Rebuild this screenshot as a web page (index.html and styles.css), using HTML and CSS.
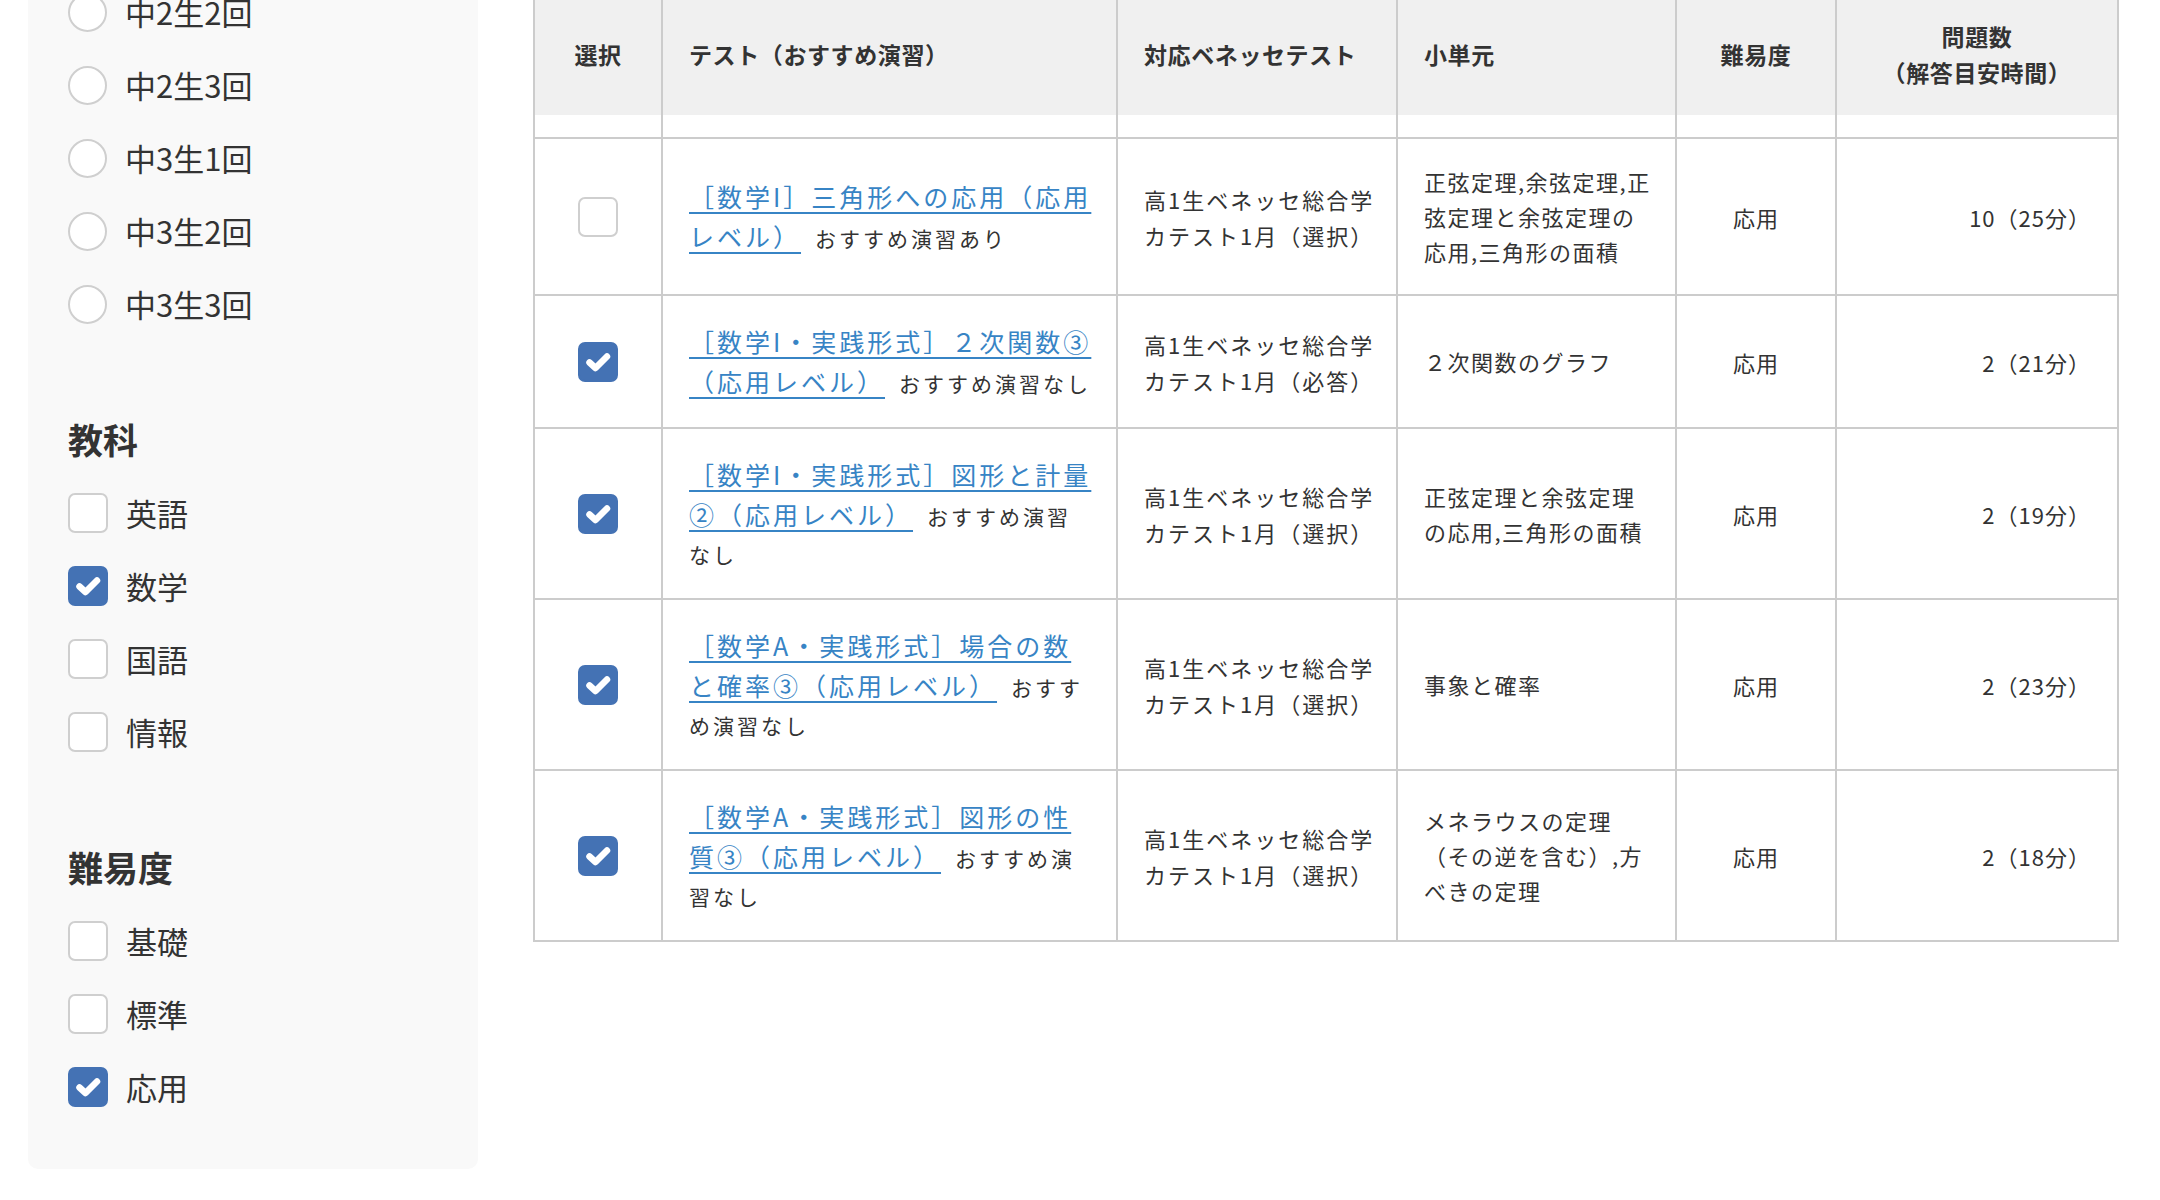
FILE: index.html
```html
<!DOCTYPE html>
<html lang="ja">
<head>
<meta charset="utf-8">
<title>テスト選択</title>
<link rel="stylesheet" href="styles.css">
</head>
<body>
<div class="page">
  <aside class="sidebar">
    <ul class="opts">
      <li class="opt"><span class="radio"></span><span class="lbl">中2生2回</span></li>
      <li class="opt"><span class="radio"></span><span class="lbl">中2生3回</span></li>
      <li class="opt"><span class="radio"></span><span class="lbl">中3生1回</span></li>
      <li class="opt"><span class="radio"></span><span class="lbl">中3生2回</span></li>
      <li class="opt"><span class="radio"></span><span class="lbl">中3生3回</span></li>
    </ul>
    <section class="group">
      <h3 class="group-title">教科</h3>
      <ul class="opts">
        <li class="opt"><span class="box"></span><span class="lbl">英語</span></li>
        <li class="opt"><span class="box checked"><svg viewBox="0 0 40 40"><path d="M11.5 20.5 L17.5 26 L29 14.5"/></svg></span><span class="lbl">数学</span></li>
        <li class="opt"><span class="box"></span><span class="lbl">国語</span></li>
        <li class="opt"><span class="box"></span><span class="lbl">情報</span></li>
      </ul>
    </section>
    <section class="group">
      <h3 class="group-title">難易度</h3>
      <ul class="opts">
        <li class="opt"><span class="box"></span><span class="lbl">基礎</span></li>
        <li class="opt"><span class="box"></span><span class="lbl">標準</span></li>
        <li class="opt"><span class="box checked"><svg viewBox="0 0 40 40"><path d="M11.5 20.5 L17.5 26 L29 14.5"/></svg></span><span class="lbl">応用</span></li>
      </ul>
    </section>
  </aside>

  <main class="main">
    <table class="tests">
      <colgroup>
        <col class="w-sel"><col class="w-test"><col class="w-bn"><col class="w-unit"><col class="w-lv"><col class="w-num">
      </colgroup>
      <thead>
        <tr>
          <th class="center">選択</th>
          <th>テスト（おすすめ演習）</th>
          <th>対応ベネッセテスト</th>
          <th>小単元</th>
          <th class="center">難易度</th>
          <th class="center">問題数<br>（解答目安時間）</th>
        </tr>
      </thead>
      <tbody>
        <tr class="spacer"><td></td><td></td><td></td><td></td><td></td><td></td></tr>
        <tr>
          <td class="c-sel"><span class="box"></span></td>
          <td class="c-test"><a class="link" href="#">［数学I］三角形への応用（応用<br>レベル）</a><span class="note">おすすめ演習あり</span></td>
          <td class="c-bn">高1生ベネッセ総合学<br>カテスト1月（選択）</td>
          <td class="c-unit">正弦定理,余弦定理,正<br>弦定理と余弦定理の<br>応用,三角形の面積</td>
          <td class="c-lv">応用</td>
          <td class="c-num">10（25分）</td>
        </tr>
        <tr>
          <td class="c-sel"><span class="box checked"><svg viewBox="0 0 40 40"><path d="M11.5 20.5 L17.5 26 L29 14.5"/></svg></span></td>
          <td class="c-test"><a class="link" href="#">［数学I・実践形式］２次関数③<br>（応用レベル）</a><span class="note">おすすめ演習なし</span></td>
          <td class="c-bn">高1生ベネッセ総合学<br>カテスト1月（必答）</td>
          <td class="c-unit">２次関数のグラフ</td>
          <td class="c-lv">応用</td>
          <td class="c-num">2（21分）</td>
        </tr>
        <tr>
          <td class="c-sel"><span class="box checked"><svg viewBox="0 0 40 40"><path d="M11.5 20.5 L17.5 26 L29 14.5"/></svg></span></td>
          <td class="c-test"><a class="link" href="#">［数学I・実践形式］図形と計量<br>②（応用レベル）</a><span class="note">おすすめ演習<br>なし</span></td>
          <td class="c-bn">高1生ベネッセ総合学<br>カテスト1月（選択）</td>
          <td class="c-unit">正弦定理と余弦定理<br>の応用,三角形の面積</td>
          <td class="c-lv">応用</td>
          <td class="c-num">2（19分）</td>
        </tr>
        <tr>
          <td class="c-sel"><span class="box checked"><svg viewBox="0 0 40 40"><path d="M11.5 20.5 L17.5 26 L29 14.5"/></svg></span></td>
          <td class="c-test"><a class="link" href="#">［数学A・実践形式］場合の数<br>と確率③（応用レベル）</a><span class="note">おすす<br>め演習なし</span></td>
          <td class="c-bn">高1生ベネッセ総合学<br>カテスト1月（選択）</td>
          <td class="c-unit">事象と確率</td>
          <td class="c-lv">応用</td>
          <td class="c-num">2（23分）</td>
        </tr>
        <tr>
          <td class="c-sel"><span class="box checked"><svg viewBox="0 0 40 40"><path d="M11.5 20.5 L17.5 26 L29 14.5"/></svg></span></td>
          <td class="c-test"><a class="link" href="#">［数学A・実践形式］図形の性<br>質③（応用レベル）</a><span class="note">おすすめ演<br>習なし</span></td>
          <td class="c-bn">高1生ベネッセ総合学<br>カテスト1月（選択）</td>
          <td class="c-unit">メネラウスの定理<br>（その逆を含む）,方<br>べきの定理</td>
          <td class="c-lv">応用</td>
          <td class="c-num">2（18分）</td>
        </tr>
      </tbody>
    </table>
  </main>
</div>
</body>
</html>
```

FILE: styles.css
```css
html, body {
  margin: 0;
  padding: 0;
  background: #ffffff;
}
body {
  width: 2160px;
  height: 1200px;
  overflow: hidden;
  font-family: "Noto Sans CJK JP", "Noto Sans", sans-serif;
  color: #333333;
}
.page {
  display: flex;
  align-items: flex-start;
}

/* ---------- sidebar ---------- */
.sidebar {
  margin-left: 28px;
  margin-top: -42px;
  width: 450px;
  box-sizing: border-box;
  padding: 34px 0 62px 40px;
  background: #f9f9f9;
  border-radius: 10px;
}
.opts {
  list-style: none;
  margin: 0;
  padding: 0;
  display: flex;
  flex-direction: column;
  gap: 33px;
}
.opt {
  display: flex;
  align-items: center;
  height: 40px;
  gap: 18px;
}
.lbl {
  font-size: 31px;
  line-height: 40px;
  color: #333333;
}
.radio {
  width: 39px;
  height: 39px;
  box-sizing: border-box;
  border: 2px solid #cfcfcf;
  border-radius: 50%;
  background: #ffffff;
  flex: none;
}
.box {
  width: 40px;
  height: 40px;
  box-sizing: border-box;
  border: 2px solid #cfcfcf;
  border-radius: 7px;
  background: #ffffff;
  flex: none;
  display: inline-block;
  vertical-align: middle;
}
.box.checked {
  background: #4472b4;
  border-color: #4472b4;
}
.box svg {
  display: block;
  width: 40px;
  height: 40px;
  margin: -2px;
}
.box svg path {
  fill: none;
  stroke: #ffffff;
  stroke-width: 6.5;
  stroke-linecap: round;
  stroke-linejoin: round;
}
.group {
  margin-top: 95px;
}
.group-title {
  margin: 0 0 34px;
  font-size: 35px;
  line-height: 40px;
  font-weight: 700;
  color: #333333;
}

/* ---------- table ---------- */
.main {
  margin-left: 55px;
}
.tests {
  border-collapse: collapse;
  table-layout: fixed;
  width: 1584px;
}
.w-sel { width: 128px; }
.w-test { width: 455px; }
.w-bn { width: 280px; }
.w-unit { width: 279px; }
.w-lv { width: 160px; }
.w-num { width: 282px; }

.tests th {
  background: #f0f0f0;
  height: 108px;
  padding: 0 26px 7px;
  font-size: 23px;
  line-height: 36px;
  font-weight: 700;
  letter-spacing: 0.6px;
  text-align: left;
  vertical-align: middle;
  border-left: 2px solid #cccccc;
  border-right: 2px solid #cccccc;
  color: #333333;
  white-space: nowrap;
}
.tests th.center {
  text-align: center;
  padding-left: 0;
  padding-right: 0;
}
.tests td {
  border: 2px solid #cccccc;
  padding: 25px 26px;
  vertical-align: middle;
  font-size: 22px;
  line-height: 36px;
  color: #333333;
  white-space: nowrap;
}
.tests tr.spacer td {
  height: 22px;
  padding: 0;
  border-top: none;
}
.tests td.c-sel {
  text-align: center;
}
.c-sel .box {
  display: block;
  margin: 0 auto;
}
.tests td.c-test {
  font-size: 21px;
  line-height: 30px;
}
.link {
  font-size: 25px;
  line-height: 40px;
  letter-spacing: 3px;
  color: #3784c5;
  text-decoration: underline;
  text-decoration-thickness: 2px;
  text-underline-offset: 5px;
}
.note {
  margin-left: 14px;
  font-size: 21px;
  line-height: 38px;
  letter-spacing: 3px;
  color: #333333;
}
.tests td.c-bn {
  letter-spacing: 2px;
}
.tests td.c-unit {
  font-size: 22px;
  line-height: 35px;
  letter-spacing: 1.5px;
}
.tests td.c-lv {
  text-align: center;
  padding-left: 0;
  padding-right: 0;
  letter-spacing: 1px;
}
.tests td.c-num {
  text-align: right;
  padding-right: 26px;
  letter-spacing: 1px;
}
```
